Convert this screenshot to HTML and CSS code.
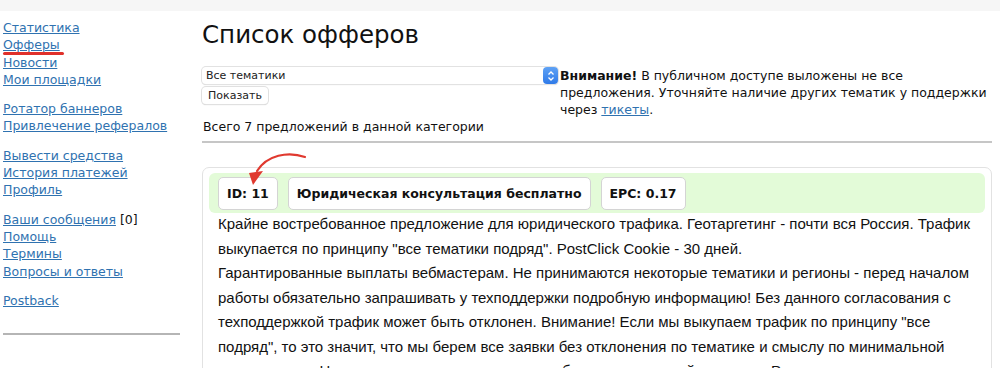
FILE: index.html
```html
<!DOCTYPE html>
<html lang="ru">
<head>
<meta charset="UTF-8">
<title>Список офферов</title>
<link rel="stylesheet" href="styles.css">
</head>
<body>
<div class="topbar"></div>
<div class="page">
  <div class="sidebar">
    <div class="menu-group">
      <a href="#">Статистика</a>
      <a href="#" class="marked">Офферы</a>
      <a href="#">Новости</a>
      <a href="#">Мои площадки</a>
    </div>
    <div class="menu-group">
      <a href="#">Ротатор баннеров</a>
      <a href="#">Привлечение рефералов</a>
    </div>
    <div class="menu-group">
      <a href="#">Вывести средства</a>
      <a href="#">История платежей</a>
      <a href="#">Профиль</a>
    </div>
    <div class="menu-group">
      <div><a href="#" class="inline">Ваши сообщения</a> [0]</div>
      <a href="#">Помощь</a>
      <a href="#">Термины</a>
      <a href="#">Вопросы и ответы</a>
    </div>
    <div class="menu-group">
      <a href="#">Postback</a>
    </div>
    <hr class="side-line">
  </div>

  <div class="main">
    <h1>Список офферов</h1>
    <div class="filter-row">
      <form class="filter">
        <div class="select-wrap">
          <select>
            <option>Все тематики</option>
          </select>
          <span class="select-arrow">
            <svg width="8" height="12" viewBox="0 0 8 12"><path d="M1.5 4.5 L4 2 L6.5 4.5 M1.5 7.5 L4 10 L6.5 7.5" fill="none" stroke="#fff" stroke-width="1.3"/></svg>
          </span>
        </div>
        <button type="button">Показать</button>
      </form>
      <div class="notice">
        <b>Внимание!</b> В публичном доступе выложены не все предложения. Уточняйте наличие других тематик у поддержки через <a href="#">тикеты</a>.
      </div>
    </div>
    <p class="total">Всего 7 предложений в данной категории</p>
    <hr class="main-line">

    <div class="offer">
      <svg class="pointer" width="70" height="40" viewBox="0 0 70 40">
        <path d="M62 6 C45 0 24 4 14 20" fill="none" stroke="#e0392f" stroke-width="2.2" stroke-linecap="round"/>
        <path d="M6 22 L20 20 L10 34 Z" fill="#e0392f"/>
      </svg>
      <div class="offer-head">
        <span class="badge">ID: 11</span>
        <span class="badge">Юридическая консультация бесплатно</span>
        <span class="badge">EPC: 0.17</span>
      </div>
      <div class="offer-text">
        Крайне востребованное предложение для юридического трафика. Геотаргетинг - почти вся Россия. Трафик выкупается по принципу "все тематики подряд". PostClick Cookie - 30 дней.<br>
        Гарантированные выплаты вебмастерам. Не принимаются некоторые тематики и регионы - перед началом работы обязательно запрашивать у техподдержки подробную информацию! Без данного согласования с техподдержкой трафик может быть отклонен. Внимание! Если мы выкупаем трафик по принципу "все подряд", то это значит, что мы берем все заявки без отклонения по тематике и смыслу по минимальной цене региона. Цены региона смотрите в колонке без проставленной тематики. Регионы, которые мы не принимаем, указаны в описании.
      </div>
    </div>
  </div>
</div>
</body>
</html>
```

FILE: styles.css
```css
body {
  margin: 0;
  background: #fff;
  color: #111;
  font-family: "DejaVu Sans", Verdana, sans-serif;
  font-size: 12.5px;
}

a {
  color: #2f72b0;
}

.topbar {
  height: 11px;
  background: #f6f6f6;
}

.page {
  display: flex;
}

/* left menu */
.sidebar {
  width: 177px;
  flex-shrink: 0;
  padding: 8px 4px 0 3px;
  line-height: 17.3px;
}

.menu-group {
  margin-bottom: 12px;
}

.menu-group a {
  display: block;
  width: max-content;
}

.menu-group a.inline {
  display: inline;
}

.marked {
  position: relative;
}

.marked::after {
  content: "";
  position: absolute;
  left: 0;
  right: -4px;
  top: 16px;
  height: 2.5px;
  border-radius: 2px;
  background: #e0302a;
}

.side-line {
  margin: 24px 0 0;
  border: 0;
  border-top: 2px solid #b5b5b5;
}

/* main column */
.main {
  flex: 1;
  padding: 0 8px 0 18px;
}

h1 {
  margin: 8px 0 16px 0;
  font-size: 24.5px;
  font-weight: normal;
  line-height: 32px;
}

.filter-row {
  display: flex;
  align-items: flex-start;
}

.filter {
  width: 356px;
  flex-shrink: 0;
}

.select-wrap {
  display: flex;
  height: 17px;
  border-radius: 4px;
  box-shadow: 0 0 0 1px #e2e2e2, 0 1px 1px #d0d0d0;
  background: #fff;
}

.select-wrap select {
  flex: 1;
  appearance: none;
  -webkit-appearance: none;
  border: 0;
  background: transparent;
  font-family: "DejaVu Sans", Verdana, sans-serif;
  font-size: 11px;
  color: #222;
  padding: 0 0 0 4px;
  outline: none;
}

.select-arrow {
  width: 15px;
  height: 17px;
  border-radius: 4px;
  background: linear-gradient(#5fa2f5, #2f7ae8);
  display: flex;
  align-items: center;
  justify-content: center;
}

.filter button {
  margin-top: 3px;
  height: 17px;
  padding: 0 6px;
  font-family: "DejaVu Sans", Verdana, sans-serif;
  font-size: 11px;
  color: #222;
  background: #fff;
  border: 0;
  border-radius: 4px;
  box-shadow: 0 0 0 1px #e0e0e0, 0 1px 1px #c8c8c8;
}

.notice {
  width: 430px;
  margin-left: 2px;
  line-height: 17px;
}

.total {
  margin: 0 0 0 1px;
  line-height: 17px;
}

.main-line {
  margin: 6px 0 0;
  border: 0;
  border-top: 2px solid #c6c6c6;
}

/* offer card */
.offer {
  position: relative;
  margin-top: 24px;
  border: 1px solid #e2e2e2;
  border-radius: 7px;
  padding: 5px 6px 10px;
}

.pointer {
  position: absolute;
  left: 40px;
  top: -17px;
}

.offer-head {
  display: flex;
  gap: 10px;
  padding: 4px 9px 3px;
  background: #e3fbd8;
  border-radius: 6px;
}

.badge {
  background: #fff;
  border: 1px solid #d4d4d4;
  border-radius: 5px;
  padding: 0 8px;
  height: 31px;
  line-height: 31px;
  font-weight: bold;
  font-size: 12.5px;
}

.offer-text {
  margin-top: -1px;
  padding: 0 9px;
  font-family: "Liberation Sans", Arial, sans-serif;
  font-size: 15px;
  line-height: 24.5px;
}
```
